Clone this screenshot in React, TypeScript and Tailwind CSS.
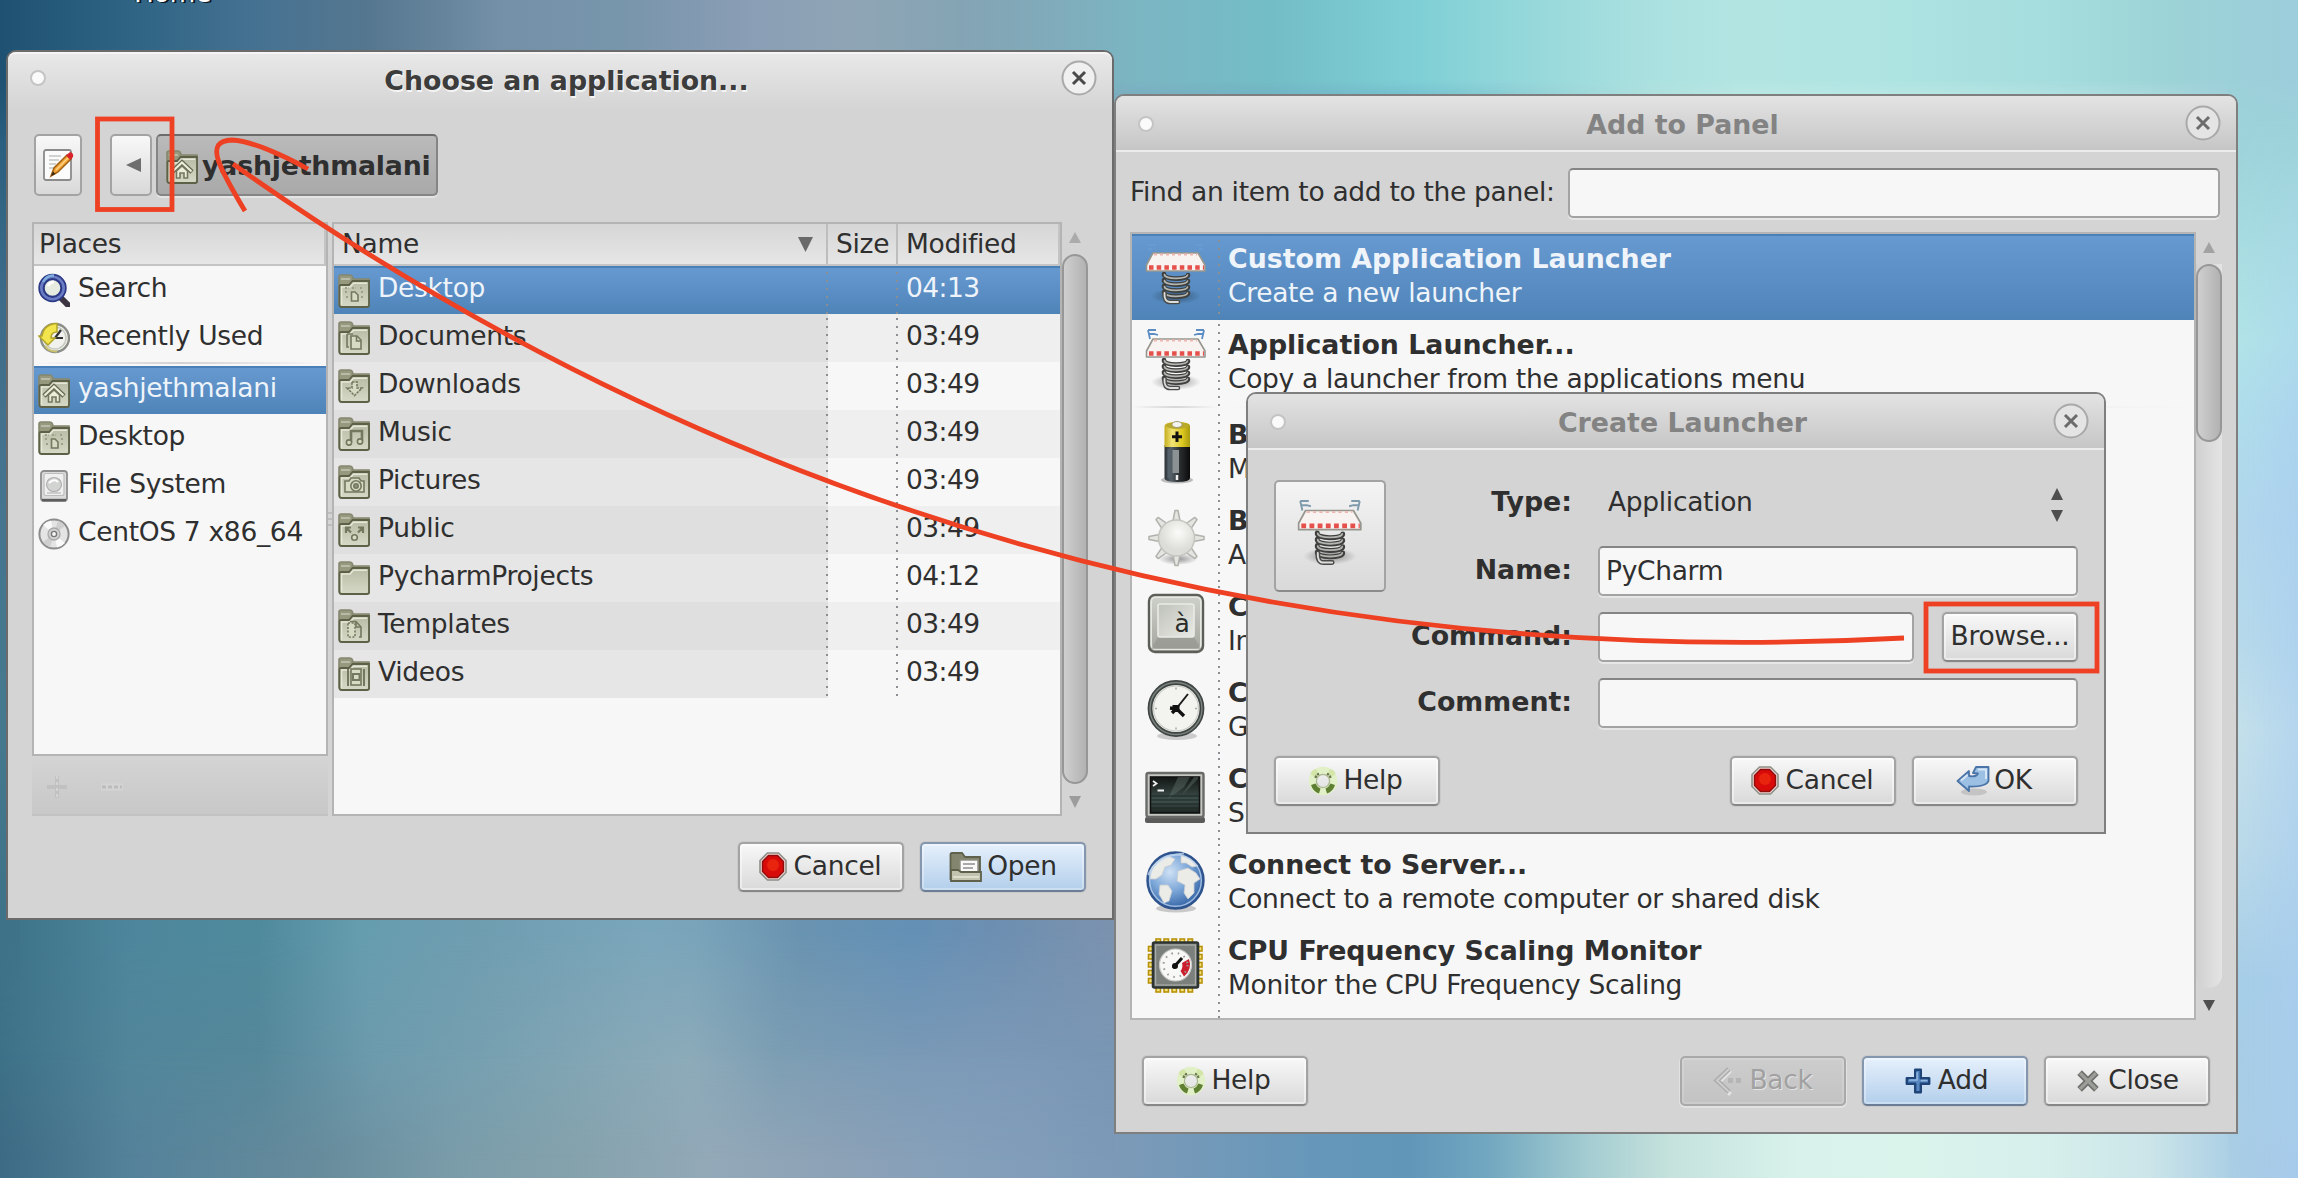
import React from "react";

type FolderKind = "plain" | "home" | "desktop" | "documents" | "downloads" | "music" | "pictures" | "public" | "templates" | "videos";

/* ---------- small icons ---------- */

function FolderEmblem({ kind }: { kind: FolderKind }) {
  const p = { fill: "#d8dbc4", stroke: "#74785f", strokeWidth: 1.6 };
  switch (kind) {
    case "home":
      return (
        <g {...p}>
          <path d="M6 22 L16 12.5 L26 22" fill="none" stroke="#63674f" strokeWidth="4.6" />
          <path d="M6.5 21.5 L16 12.5 L25.500 21.5" fill="none" stroke="#eceed9" strokeWidth="2.2" />
          <path d="M10.500 28 V21 L16 16 L21.500 21 V28 H18 V23 H14 V28 Z" fill="#eceed9" />
        </g>
      );
    case "desktop":
      return (
        <g {...p}>
          <path d="M13.500 18 H17 L20 21 V27 H13.500 Z" />
          <path d="M7 14 h4 M7 18 h3 M22 14 h3 M23 18 h3 M14 14 h4 M8 23 h2 M23 23 h2" strokeDasharray="2 1.5" fill="none" strokeWidth="2" stroke="#9da188" />
        </g>
      );
    case "documents":
      return (
        <g {...p}>
          <path d="M9 13 V26 H11 M9 13 H15" fill="none" />
          <path d="M13 15 H19 L23 19 V28 H13 Z" />
          <path d="M18.500 15 V20 H23" fill="none" />
        </g>
      );
    case "downloads":
      return (
        <g {...p}>
          <path d="M14 13 H19 V19 H24 L16.500 26.500 L9 19 H14 Z" strokeDasharray="2.500 1" />
        </g>
      );
    case "music":
      return (
        <g {...p}>
          <path d="M13 25 V14 H24 V24" fill="none" strokeWidth="2.6" />
          <circle cx="11" cy="25.500" r="2.600" />
          <circle cx="22" cy="24.500" r="2.600" />
        </g>
      );
    case "pictures":
      return (
        <g {...p}>
          <path d="M7 16 H11 L13 13 H21 L23 16 H26 V27 H7 Z" />
          <circle cx="18" cy="21" r="5.200" />
          <circle cx="18" cy="21" r="2.200" fill="#8d9177" />
        </g>
      );
    case "public":
      return (
        <g {...p} fill="none">
          <path d="M8 20 V14.500 H13 M8.500 15 L13 19.500 M25 20 V14.500 H20 M24.500 15 L20 19.500" strokeWidth="2.200" />
          <circle cx="16.500" cy="24.500" r="2.800" fill="#d8dbc4" />
        </g>
      );
    case "templates":
      return (
        <g {...p}>
          <path d="M10 14 H17 V28 H10 Z" strokeDasharray="2 1.600" />
          <path d="M12 12.500 H18 L23 18 V28 H21" fill="none" />
          <path d="M18 13 V18 H23" fill="none" />
        </g>
      );
    case "videos":
      return (
        <g {...p}>
          <path d="M10 12 V29 M26 12 V29" fill="none" strokeWidth="2" />
          <rect x="13" y="12" width="10" height="16" />
          <rect x="15" y="17" width="6.500" height="6" strokeWidth="2" />
        </g>
      );
    default:
      return null;
  }
}

function FolderIcon({ kind }: { kind: FolderKind }) {
  return (
    <svg width="32" height="34" viewBox="0 0 32 34" className="shrink-0">
      <path d="M1 8 V3 Q1 1 3 1 H12 Q14 1 14.500 3 L15 5 H31 V32 H3 Q1 32 1 30 Z" fill="#97997f" stroke="#85886f" strokeWidth="1.600" />
      <path d="M3 5 H12" stroke="#b9bba9" strokeWidth="2" />
      <path d="M1.500 12 Q1.500 11 3 11 H11 L14.500 7 H31 V31 Q31 33 29 33 H3.500 Q1.500 33 1.500 31 Z" fill="url(#folderFace)" stroke="#5d6148" strokeWidth="1.800" />
      <path d="M3.600 30.500 V13 H12 L15.500 9.200 H29" fill="none" stroke="#e6e8d8" strokeWidth="1.400" />
      <FolderEmblem kind={kind} />
    </svg>
  );
}

function SearchIcon() {
  return (
    <svg width="32" height="34" viewBox="0 0 32 34" className="shrink-0">
      <path d="M22 24 L30 32" stroke="#3c3440" strokeWidth="6" strokeLinecap="round" />
      <circle cx="14.500" cy="15" r="11" fill="#e6ece0" stroke="#2c3a86" strokeWidth="6.400" />
      <circle cx="14.500" cy="15" r="11.200" fill="none" stroke="#6a7cc4" strokeWidth="2.600" />
      <path d="M5 9 Q9 2 16 2.500" stroke="#7fb0e0" strokeWidth="2.500" fill="none" />
      <path d="M10 13 q2 -4 6 -4" stroke="#ffffff" strokeWidth="3" fill="none" />
    </svg>
  );
}

function RecentIcon() {
  return (
    <svg width="32" height="34" viewBox="0 0 32 34" className="shrink-0">
      <circle cx="17" cy="17" r="14" fill="#f1f2ee" stroke="#8b8e86" strokeWidth="2.400" />
      <circle cx="17" cy="17" r="11" fill="none" stroke="#c6cabf" strokeWidth="1.500" />
      <path d="M17 17 L23 9 M17 17 H25" stroke="#333" strokeWidth="2.200" />
      <path d="M19 2.500 L19 11 Q13 11 13 17 H17 L10 24 L0.800 15 H4 Q6 3 19 2.500 Z" fill="#f2e44c" stroke="#b3a52a" strokeWidth="1.500" />
      <path d="M7 25 Q11 31 19 30.500" fill="none" stroke="#c9c06a" strokeWidth="2" />
    </svg>
  );
}

function DriveIcon() {
  return (
    <svg width="32" height="34" viewBox="0 0 32 34" className="shrink-0">
      <rect x="3" y="2" width="26" height="30" rx="3" fill="#dcdcdc" stroke="#8e8e8e" strokeWidth="1.800" />
      <path d="M4 31 H28" stroke="#5e5e5e" strokeWidth="2.400" />
      <rect x="6" y="4.500" width="20" height="22" rx="2" fill="#f0f0f0" stroke="#bdbdbd" strokeWidth="1.200" />
      <ellipse cx="16" cy="15.500" rx="7.500" ry="7" fill="#d2d4d2" stroke="#b0b0b0" strokeWidth="1.200" />
      <path d="M11 14 Q16 9 20 13" stroke="#fff" strokeWidth="2" fill="none" />
      <path d="M9 24 H23" stroke="#c2c2c2" strokeWidth="1.500" />
    </svg>
  );
}

function DiscIcon() {
  return (
    <svg width="32" height="34" viewBox="0 0 32 34" className="shrink-0">
      <circle cx="16" cy="17" r="14.600" fill="#e4e4e4" stroke="#8c8c8c" strokeWidth="2" />
      <path d="M16 17 L5 8 A14 14 0 0 1 13 3.500 Z M16 17 L27 26 A14 14 0 0 1 19 30.500 Z" fill="#fafafa" />
      <path d="M16 17 L20 3.500 A14 14 0 0 1 27 9 Z M16 17 L12 30.500 A14 14 0 0 1 5 25 Z" fill="#cfcfcf" />
      <circle cx="16" cy="17" r="6" fill="#d2d2d2" stroke="#a8a8a8" strokeWidth="1.300" />
      <circle cx="16" cy="17" r="2.600" fill="#f7f7f7" stroke="#777" strokeWidth="1.400" />
    </svg>
  );
}

function EditIcon() {
  return (
    <svg width="32" height="34" viewBox="0 0 32 34">
      <rect x="2" y="2" width="27" height="30" rx="2" fill="#fbfbfb" stroke="#8b8b8b" strokeWidth="1.800" />
      <path d="M7 8 H19 M7 12 H17 M7 16 H14 M7 20 H12" stroke="#c3c6c3" strokeWidth="1.600" />
      <path d="M9 28 L12 20 L25 7 L29 11 L16 24 Z" fill="#f2a535" stroke="#a35f12" strokeWidth="1.500" />
      <path d="M14 22 L26 10" stroke="#ffd58a" strokeWidth="1.500" />
      <path d="M24 7.500 L28 4 Q32 5 31 9 L28.500 12 Z" fill="#d8232a" />
      <path d="M9 28 L11 23.500 L13.500 26 Z" fill="#3b2a14" />
    </svg>
  );
}

function CancelIcon() {
  return (
    <svg width="32" height="32" viewBox="0 0 32 32" className="shrink-0">
      <path d="M9.500 2 H20.500 L28 9.500 V21.500 L20.500 29 H9.500 L2 21.500 V9.500 Z" fill="#f4dada" stroke="#8d8f88" strokeWidth="1.600" />
      <path d="M10.500 4.500 H19.500 L25.500 10.500 V20.500 L19.500 26.500 H10.500 L4.500 20.500 V10.500 Z" fill="#d80a0a" stroke="#8e0d0d" strokeWidth="1.400" />
      <circle cx="15" cy="14" r="6" fill="#e8240e" />
    </svg>
  );
}

function OpenIcon() {
  return (
    <svg width="34" height="32" viewBox="0 0 34 32" className="shrink-0">
      <path d="M1.500 28 V3.500 Q1.500 2 3 2 H13 L16 6 H31 V28 Z" fill="#83856f" stroke="#5f614d" strokeWidth="1.800" />
      <rect x="11" y="9" width="18" height="14" fill="#fafafa" stroke="#8b8d80" strokeWidth="1.400" />
      <path d="M14 13 H26 M14 17 H24" stroke="#8f8f8f" strokeWidth="1.600" />
      <path d="M2 30 V19 H9 L12 21 H32 V30 Z" fill="#c2c4b0" stroke="#5f614d" strokeWidth="1.800" />
      <path d="M4 26 H30" stroke="#dcdece" strokeWidth="2" />
    </svg>
  );
}

function HelpIcon() {
  return (
    <svg width="32" height="32" viewBox="0 0 32 32" className="-ml-1 shrink-0">
      <circle cx="16" cy="16" r="10.500" fill="none" stroke="#e2f0c8" strokeWidth="7.500" />
      <circle cx="16" cy="16" r="6.600" fill="none" stroke="#aab890" strokeWidth="1.200" />
      <path d="M3.500 9 Q4 5 9 4 L11.500 8 Q8 9 7.500 12 Z M28.500 9 Q28 5 23 4 L20.500 8 Q24 9 24.500 12 Z" fill="#d3e6a8" />
      <path d="M4 20 Q6 26.500 12 28.500 L13.500 23.500 Q10 22 8.500 18.500 Z M28 20 Q26 26.500 20 28.500 L18.500 23.500 Q22 22 23.500 18.500 Z" fill="#5f7f33" />
      <path d="M8.500 13 Q9 10 12 8.800 M23.500 13 Q23 10 20 8.800" stroke="#66754a" strokeWidth="2.200" strokeDasharray="2.500 1" fill="none" />
    </svg>
  );
}

function OkIcon() {
  return (
    <svg width="34" height="32" viewBox="0 0 34 32" className="-ml-0.5 shrink-0">
      <ellipse cx="18" cy="27" rx="13" ry="3.500" fill="#c4c4c4" />
      <path d="M1.500 16 L13 6 V11 Q20 12.500 22 8.500 L17 8 L20 2 H32.500 V16 Q30 22 13 21.500 V26 Z" fill="#9cc0e4" stroke="#4a74a8" strokeWidth="1.800" strokeLinejoin="round" />
      <path d="M5 15.500 L11.500 10 M22 4.500 H30 V14" stroke="#d6e6f5" strokeWidth="2" fill="none" />
    </svg>
  );
}

function BackIcon() {
  return (
    <svg width="32" height="32" viewBox="0 0 32 32" className="shrink-0">
      <g fill="none" transform="translate(1.500 1.500)" stroke="#e4e4e4" strokeWidth="4">
        <path d="M16 4 L4 16 L16 28" />
      </g>
      <path d="M16 4 L4 15.500 L16 27" fill="none" stroke="#acacac" strokeWidth="5" />
      <path d="M16 4 L4 15.500 L16 27" fill="none" stroke="#cdcdcd" strokeWidth="2" />
      <rect x="15" y="13" width="5" height="5" fill="#b5b5b5" />
      <rect x="23" y="13" width="5" height="5" fill="#b5b5b5" />
    </svg>
  );
}

function AddIcon() {
  return (
    <svg width="28" height="28" viewBox="1 1 30 30" className="mx-0.5 shrink-0">
      <path d="M13 4 H19 V13 H28 V19 H19 V28 H13 V19 H4 V13 H13 Z" fill="#5687c2" stroke="#1f4477" strokeWidth="2.600" strokeLinejoin="round" />
      <path d="M15 6.500 V15 H6.500 M19 15.500 H26" stroke="#93b8e0" strokeWidth="1.600" fill="none" />
    </svg>
  );
}

function CloseXIcon() {
  return (
    <svg width="28" height="28" viewBox="1 1 30 30" className="mx-0.5 shrink-0">
      <path d="M7 7 L25 25 M25 7 L7 25" stroke="#6f716d" strokeWidth="7" />
      <path d="M7.500 7.500 L24.500 24.500 M24.500 7.500 L7.500 24.500" stroke="#9b9d98" strokeWidth="3.500" />
    </svg>
  );
}

function Triangle({ dir, color, w = 12, h = 12 }: { dir: "up" | "down" | "left"; color: string; w?: number; h?: number }) {
  const d = dir === "up" ? "M6 0 L12 12 H0 Z" : dir === "down" ? "M6 12 L12 0 H0 Z" : "M0 6 L12 0 V12 Z";
  return (
    <svg width={w} height={h} viewBox="0 0 12 12" preserveAspectRatio="none">
      <path d={d} fill={color} />
    </svg>
  );
}

/* ---------- large list icons ---------- */

function LauncherIcon({ size = 64, motion = "#5b8cc4", faint = false }: { size?: number; motion?: string; faint?: boolean }) {
  const coils = [29, 35, 41, 47];
  return (
    <svg width={size} height={size} viewBox="0 0 64 64" className="overflow-visible">
      <ellipse cx="32" cy="51" rx="25" ry="8" fill="url(#softShadow)" />
      <g fill="none" strokeLinecap="round">
        {coils.map((y) => (
          <g key={y}>
            <path d={`M20 ${y} C19 ${y + 6} 44 ${y + 6} 44 ${y + 1}`} stroke="#3f403e" strokeWidth="4.600" />
            <path d={`M20.500 ${y + 0.500} C20 ${y + 5.500} 43 ${y + 5.500} 43.500 ${y + 1}`} stroke="#b3b5b1" strokeWidth="1.700" />
          </g>
        ))}
        <path d="M20.500 48 Q20 57 26 57 H34" stroke="#4a4b49" strokeWidth="4.600" />
        <path d="M20.500 48 Q20 57 26 57 H34" stroke="#dcdedb" strokeWidth="1.800" />
      </g>
      <path d="M9 8 H54 L61 20 V26 H2.500 V20 Z" fill="#f8f3f0" stroke="#96968f" strokeWidth="1.600" strokeLinejoin="round" />
      <path d="M10 9.500 H53" stroke="#efb6b0" strokeWidth="1.800" strokeDasharray="3 3" />
      <path d="M5 22.500 H60" stroke="#e5504b" strokeWidth="4.400" strokeDasharray="4.500 3.200" />
      {!faint && (
        <g stroke={motion} strokeWidth="1.800" fill="none">
          <path d="M4 -1 H12 M5 3 H10 L14 4 M4 -1 L6 8 M60 -1 H52 M59 3 H54 L50 4 M60 -1 L58 8" />
        </g>
      )}
      {faint && <path d="M4 0 H12 M4 4 H8 M59 0 H52 M59 4 H55" stroke="#6b9dd3" strokeWidth="1.500" />}
    </svg>
  );
}

function BatteryIcon() {
  return (
    <svg width="64" height="64" viewBox="0 0 64 64">
      <ellipse cx="33" cy="59" rx="16" ry="3.500" fill="#bbb" />
      <path d="M20.500 24 H46 V57 Q46 61 33 61 Q20.500 61 20.500 57 Z" fill="url(#batteryBody)" />
      <path d="M20.500 26 V5 Q20.500 1 33 1 Q46 1 46 5 V26 Z" fill="url(#batteryTop)" />
      <ellipse cx="33" cy="4.500" rx="11" ry="3.500" fill="#b9a92c" />
      <ellipse cx="33" cy="3.500" rx="5" ry="3" fill="#f3f3f0" stroke="#a09c7c" />
      <path d="M33 10.500 V21 M28 15.700 H38" stroke="#111" strokeWidth="3" />
      <path d="M28.500 29 H35 V52 H28.500 Z" fill="#8c9194" />
      <path d="M33 54 V59" stroke="#eee" strokeWidth="2.500" />
      <path d="M25 28 V57" stroke="#54606a" strokeWidth="3" />
    </svg>
  );
}

function BrightnessIcon() {
  const angles = [0, 45, 90, 135, 180, 225, 270, 315];
  return (
    <svg width="64" height="64" viewBox="0 0 64 64" className="overflow-visible">
      <ellipse cx="34" cy="52" rx="20" ry="6" fill="url(#softShadow)" />
      {angles.map((a) => (
        <path key={a} d="M29 14 L31 3.500 H34 L36 14 Z" fill="#e4e5e1" stroke="#b0b2ac" strokeWidth="1.500" strokeLinejoin="round" transform={`rotate(${a} 32.500 31)`} />
      ))}
      <circle cx="32.500" cy="31" r="18" fill="url(#sunFace)" stroke="#c3c5bf" strokeWidth="1.500" />
    </svg>
  );
}

function CharacterIcon() {
  return (
    <svg width="64" height="64" viewBox="0 0 64 64">
      <rect x="5" y="2" width="54" height="57" rx="6" fill="url(#keyBody)" stroke="#5c5e58" strokeWidth="2.400" />
      <rect x="7.200" y="4.200" width="49.600" height="52" rx="4.500" fill="none" stroke="#e6e8e3" strokeWidth="1.600" />
      <path d="M7 56 L14 44 H50 L57 56 Z" fill="#8f928a" opacity="0.550" />
      <rect x="14" y="11" width="36" height="33" rx="2" fill="url(#keyFace)" stroke="#e9ebe6" strokeWidth="1.600" />
      <text x="38" y="38.500" fontSize="25" fontFamily="DejaVu Sans" textAnchor="middle" fill="#2b2d2b">
        à
      </text>
    </svg>
  );
}

function ClockIcon() {
  return (
    <svg width="64" height="64" viewBox="0 0 64 64">
      <ellipse cx="33" cy="57" rx="20" ry="4" fill="#ccc" />
      <circle cx="32" cy="29.500" r="26" fill="#f3f3ef" stroke="#3f4542" strokeWidth="4.800" />
      <circle cx="32" cy="29.500" r="26" fill="none" stroke="#7c8480" strokeWidth="1.400" />
      <circle cx="32" cy="29.500" r="22.500" fill="none" stroke="#c9cbc5" strokeWidth="1.200" />
      <path d="M32 8.500 v2 M32 48.500 v2 M11 29.500 h2 M51 29.500 h2" stroke="#aaa" strokeWidth="1.500" />
      <path d="M32 30 L44 15" stroke="#1b1b1b" strokeWidth="2" />
      <path d="M26 29 L33 30 L40 37 M32 30 L28 34" stroke="#111" strokeWidth="3.400" fill="none" />
      <rect x="28.500" y="26" width="7" height="7" fill="#111" />
    </svg>
  );
}

function TerminalIcon() {
  return (
    <svg width="64" height="64" viewBox="0 0 64 64">
      <rect x="1" y="52" width="60" height="6" rx="2" fill="#5b5c5a" />
      <rect x="2.500" y="8" width="57" height="44" rx="2" fill="#c4c6c2" stroke="#6a6b68" strokeWidth="2.400" />
      <rect x="6.500" y="12" width="49" height="36" fill="url(#termFace)" stroke="#111" strokeWidth="1.600" />
      <path d="M34 12 L24 34 L40 22 L46 12 Z M50 12 L38 30 L54 14 V12 Z" fill="#5f6e69" opacity="0.450" />
      <path d="M9 16 L12.500 18.500 L9 21 M13.500 25.500 H20" stroke="#f0f0f0" strokeWidth="1.800" fill="none" />
      <path d="M7 31 H55 M7 35 H55 M7 39 H55 M7 43 H55" stroke="#1d2724" strokeWidth="1" />
    </svg>
  );
}

function GlobeIcon() {
  return (
    <svg width="64" height="64" viewBox="0 0 64 64">
      <ellipse cx="32" cy="57.500" rx="20" ry="4" fill="#c9c9c9" />
      <circle cx="31.500" cy="29.500" r="28" fill="url(#globeSea)" stroke="#2f548d" strokeWidth="2.400" />
      <g fill="#ebece7" stroke="#c6cbd0" strokeWidth="0.800">
        <path d="M8 16 Q14 8 24 5 L31 8 L27 14 L21 16 L18 24 L12 28 L6 28 Q5 22 8 16 Z" />
        <path d="M37 4 Q48 7 54 15 L48 16 L42 12 L37 12 Z" />
        <path d="M16 34 L24 34 L28 40 L25 50 L20 52 L15 43 Z" />
        <path d="M34 20 L44 17 L52 22 L56 28 L50 32 L50 42 L44 48 L40 42 L41 34 L33 30 Z" />
      </g>
      <path d="M4 24 Q14 4 40 2.500" stroke="#cfe0f3" strokeWidth="2" fill="none" opacity="0.700" />
      <circle cx="31.500" cy="29.500" r="25.800" fill="none" stroke="#b6d0ee" strokeWidth="1.400" opacity="0.800" />
    </svg>
  );
}

function CpuIcon() {
  const pins = [12, 20, 28, 36, 44];
  return (
    <svg width="64" height="64" viewBox="0 0 64 64">
      <g fill="#f3e27a" stroke="#b8930a" strokeWidth="1.600">
        {pins.map((p) => (
          <g key={p}>
            <rect x={p} y="2" width="4.500" height="5" />
            <rect x={p} y="49" width="4.500" height="6" />
            <rect x="4.500" y={p - 2.500} width="5" height="4.500" />
            <rect x="53" y={p - 2.500} width="5" height="4.500" />
          </g>
        ))}
      </g>
      <rect x="9" y="5.500" width="45" height="45" rx="1.500" fill="#7b807d" stroke="#2e3432" strokeWidth="2.600" />
      <rect x="11.600" y="8" width="39.800" height="40" fill="none" stroke="#a9adaa" strokeWidth="1.200" />
      <circle cx="31.500" cy="28" r="16" fill="#f8f8f7" stroke="#c9cac8" strokeWidth="1.200" />
      <path d="M45 22 A15 15 0 0 1 40 39.500 L36.500 34 A8.500 8.500 0 0 0 38 26 Z" fill="#cc1f2b" />
      <circle cx="31.500" cy="28" r="12" fill="none" stroke="#999" strokeWidth="2" strokeDasharray="1.500 5" />
      <path d="M29 31 L38 21" stroke="#111" strokeWidth="3" />
      <circle cx="31" cy="29" r="3" fill="#111" />
    </svg>
  );
}

/* ---------- shared widgets ---------- */

function Button({ icon, label, tone = "normal", className = "w-[166px]" }: { icon?: React.ReactNode; label: string; tone?: "normal" | "primary" | "disabled"; className?: string }) {
  const tones = {
    normal: "border-[#a3a3a3] border-b-[#878787] bg-linear-to-b from-[#f8f8f8] to-[#d9d9d9] text-[#2f2f2f] shadow-[0_0_0_1px_#cacaca,inset_0_0_0_2px_rgba(255,255,255,0.45)]",
    primary: "border-[#8597ae] border-b-[#6b7d94] bg-linear-to-b from-[#e6f0fc] to-[#b3cfeb] text-[#2f2f2f] shadow-[0_0_0_1px_#cacaca,inset_0_0_0_2px_rgba(255,255,255,0.3)]",
    disabled: "border-[#a9a9a9] bg-linear-to-b from-[#cdcdcd] to-[#c3c3c3] text-[#a1a1a1] shadow-[0_1px_0_1px_#e2e2e2,inset_0_0_0_2px_rgba(255,255,255,0.15)] [text-shadow:1px_1px_0_#e4e4e4]",
  };
  return (
    <button className={`flex h-[50px] items-center justify-center gap-1 rounded-[5px] border-2 ${tones[tone]} ${className}`}>
      {icon}
      <span className="pb-0.5">{label}</span>
    </button>
  );
}

function TitleBar({ title, active }: { title: string; active?: boolean }) {
  return (
    <div
      className={
        active
          ? "flex h-[58px] shrink-0 items-start rounded-t-[8px] border-t-2 border-[#f6f4f4] bg-linear-to-b from-[#e8e8e8] to-[#d4d4d4] px-[22px] pt-[2px]"
          : "flex h-[56px] shrink-0 items-start rounded-t-[8px] border-b-2 border-[#ececec] bg-linear-to-b from-[#e3e3e3] to-[#c6c6c6] px-[22px] pt-[4px]"
      }
    >
      <div className={`size-4 rounded-full border-2 border-[#c4c4c4] bg-[#fafafa] ${active ? "mt-[14px]" : "mt-4"}`} />
      <div
        className={`flex-1 text-center text-[26.800px] leading-[50px] font-bold tracking-normal ${active ? "pl-[26px] text-[#3c3c3c] [text-shadow:1px_2px_0_#f4f4f4]" : "pl-[26px] text-[#838383]"}`}
      >
        {title}
      </div>
      <svg width="36" height="36" viewBox="0 0 36 36" className={active ? "mt-1 -mr-[7px]" : "mt-[5px] -mr-[7px]"}>
        <circle cx="18" cy="18" r="16.500" fill={active ? "#f0f0f0" : "#e4e4e4"} stroke="#a9a9a9" strokeWidth="2" />
        <path d="M12 12 L24 24 M24 12 L12 24" stroke={active ? "#4a4a4a" : "#6c6c6c"} strokeWidth="3" />
      </svg>
    </div>
  );
}

function Entry({ value = "", className = "" }: { value?: string; className?: string }) {
  return <div className={`h-[50px] rounded-[5px] border-2 border-[#a3a3a3] border-t-[#858585] bg-[#f7f7f7] pl-1.5 leading-[46px] shadow-[0_2px_0_#e6e6e6] ${className}`}>{value}</div>;
}

const dots = "bg-[repeating-linear-gradient(to_bottom,transparent_0_4px,#8b8f94_4px_6px,transparent_6px_8px)]";
const selected = "border-t-2 border-[#4a80b8] bg-linear-to-b from-[#6699d0] to-[#4f84b9] text-[#eef4fa]";

/* ---------- file chooser ---------- */

const files: { name: string; kind: FolderKind; time: string }[] = [
  { name: "Desktop", kind: "desktop", time: "04:13" },
  { name: "Documents", kind: "documents", time: "03:49" },
  { name: "Downloads", kind: "downloads", time: "03:49" },
  { name: "Music", kind: "music", time: "03:49" },
  { name: "Pictures", kind: "pictures", time: "03:49" },
  { name: "Public", kind: "public", time: "03:49" },
  { name: "PycharmProjects", kind: "plain", time: "04:12" },
  { name: "Templates", kind: "templates", time: "03:49" },
  { name: "Videos", kind: "videos", time: "03:49" },
];

function PlaceRow({ icon, label, active }: { icon: React.ReactNode; label: string; active?: boolean }) {
  return (
    <div className={`flex h-12 items-center gap-2 pl-1 ${active ? selected : ""}`}>
      {icon}
      <span className={active ? "pb-[6px]" : "pb-[5px]"}>{label}</span>
    </div>
  );
}

function ChooserDialog() {
  return (
    <section className="absolute top-[50px] left-[6px] z-20 flex h-[870px] w-[1108px] flex-col rounded-t-[10px] border-2 border-[#6b6b6b] bg-[#d4d4d4]">
      <TitleBar title="Choose an application..." active />
      <div className="mt-6 flex pl-[26px]">
        <div className="flex h-[62px] w-12 items-center justify-center rounded-[5px] border-2 border-[#a3a3a3] bg-linear-to-b from-[#f8f8f8] to-[#d9d9d9]">
          <EditIcon />
        </div>
        <div className="ml-7 flex h-[62px] w-[42px] items-center justify-center rounded-[5px] border-2 border-[#a3a3a3] bg-linear-to-b from-[#f8f8f8] to-[#d9d9d9] pl-1">
          <Triangle dir="left" color="#6e6e6e" w={15} h={14} />
        </div>
        <div className="ml-1 flex h-[62px] w-[282px] items-center gap-1 rounded-[5px] border-2 border-[#858585] border-t-[#6c6c6c] bg-linear-to-b from-[#bababa] to-[#a9a9a9] pl-2 shadow-[0_2px_0_#e4e4e4]">
          <div className="pt-1">
            <FolderIcon kind="home" />
          </div>
          <span className="pt-0.5 text-[26.800px] font-bold tracking-[-0.200px]">yashjethmalani</span>
        </div>
      </div>

      <div className="mt-[26px] flex h-[594px] pl-6">
        <div className="w-[296px]">
          <div className="flex h-[534px] flex-col border-2 border-[#b4b4b4] bg-[#f7f7f7]">
            <div className="h-[42px] border-r-2 border-b-2 border-[#c4c4c4] bg-linear-to-b from-[#d6d6d6] to-[#e6e6e6] pl-[5px] leading-[40px]">Places</div>
            <PlaceRow icon={<SearchIcon />} label="Search" />
            <PlaceRow icon={<RecentIcon />} label="Recently Used" />
            <div className="h-1 bg-linear-to-r from-[#f7f7f7] via-[#d2d2d2] to-[#f7f7f7] bg-[length:100%_2px] bg-no-repeat" />
            <PlaceRow icon={<FolderIcon kind="home" />} label="yashjethmalani" active />
            <PlaceRow icon={<FolderIcon kind="desktop" />} label="Desktop" />
            <PlaceRow icon={<DriveIcon />} label="File System" />
            <PlaceRow icon={<DiscIcon />} label="CentOS 7 x86_64" />
          </div>
          <div className="flex h-[60px] items-center gap-8 border-b-2 border-[#c2c2c2] bg-linear-to-b from-[#d4d4d4] to-[#c8c8c8] pt-1 pl-[14px]">
            <svg width="22" height="26" viewBox="0 0 22 26">
              <path d="M11 2 V24 M1 13 H21" stroke="#c1c1c1" strokeWidth="4" />
              <path d="M11 2 V24" stroke="#dadada" strokeWidth="1.500" strokeDasharray="3 3" />
            </svg>
            <svg width="24" height="26" viewBox="0 0 24 26">
              <path d="M1 13 H23" stroke="#d4d4d4" strokeWidth="7" />
              <path d="M2 13 H22" stroke="#bcbcbc" strokeWidth="3" strokeDasharray="4 2" />
            </svg>
          </div>
        </div>
        <div className="flex w-1 flex-col gap-[4px] pt-[290px]">
          <div className="h-[2px] bg-[#bdbdbd]" />
          <div className="h-[2px] bg-[#bdbdbd]" />
          <div className="h-[2px] bg-[#bdbdbd]" />
        </div>
        <div className="w-[730px] border-2 border-[#b4b4b4] bg-[#f7f7f7]">
          <div className="flex h-[42px] border-r-2 border-b-2 border-[#c4c4c4] bg-linear-to-b from-[#d6d6d6] to-[#e6e6e6] leading-[40px]">
            <div className="flex w-[494px] items-center justify-between border-r-2 border-[#bdbdbd] pr-[13px] pl-2">
              Name
              <Triangle dir="down" color="#6a6a6a" w={15} h={15} />
            </div>
            <div className="w-[70px] border-r-2 border-[#bdbdbd] pl-2">Size</div>
            <div className="flex-1 pl-2">Modified</div>
          </div>
          {files.map((f, i) => {
            const active = i === 0;
            const odd = i % 2 === 1;
            return (
              <div key={f.name} className={`flex h-12 ${active ? selected : odd ? "bg-[#efefef]" : "bg-[#f7f7f7]"}`}>
                <div className={`flex w-[494px] items-center gap-2 pl-1 ${active ? "" : odd ? "bg-[#dfdfdf]" : "bg-[#e6e6e6]"}`}>
                  <FolderIcon kind={f.kind} />
                  <span className={`flex-1 ${active ? "pb-[6px]" : "pb-[5px]"}`}>{f.name}</span>
                  <span className={`w-[2px] self-stretch ${dots}`} />
                </div>
                <div className="flex w-[70px] justify-end">
                  <span className={`w-[2px] ${dots}`} />
                </div>
                <div className={`flex flex-1 items-center pl-2 tracking-[-0.550px] ${active ? "pb-[6px]" : "pb-[5px]"}`}>{f.time}</div>
              </div>
            );
          })}
        </div>
        <div className="flex w-[26px] flex-col items-center pt-[10px]">
          <Triangle dir="up" color="#ababab" w={12} h={11} />
          <div className="mt-[11px] h-[530px] w-[26px] rounded-full border-2 border-[#979797] bg-linear-to-r from-[#cfcfcf] to-[#b2b2b2]" />
          <div className="mt-3">
            <Triangle dir="down" color="#9c9c9c" w={12} h={12} />
          </div>
        </div>
      </div>

      <div className="mt-[26px] flex justify-end gap-4 pr-[26px]">
        <Button icon={<CancelIcon />} label="Cancel" className="w-[166px] pr-[3px]" />
        <Button icon={<OpenIcon />} label="Open" tone="primary" />
      </div>
    </section>
  );
}

/* ---------- add to panel ---------- */

const applets: { title: string; text: string; icon: React.ReactNode }[] = [
  { title: "Custom Application Launcher", text: "Create a new launcher", icon: <LauncherIcon faint /> },
  { title: "Application Launcher...", text: "Copy a launcher from the applications menu", icon: <LauncherIcon /> },
  { title: "Battery Charge Monitor", text: "Monitor a laptop's remaining power", icon: <BatteryIcon /> },
  { title: "Brightness Applet", text: "Adjusts laptop panel brightness", icon: <BrightnessIcon /> },
  { title: "Character Palette", text: "Insert characters", icon: <CharacterIcon /> },
  { title: "Clock", text: "Get the current time and date", icon: <ClockIcon /> },
  { title: "Command", text: "Shows the output of a command", icon: <TerminalIcon /> },
  { title: "Connect to Server...", text: "Connect to a remote computer or shared disk", icon: <GlobeIcon /> },
  { title: "CPU Frequency Scaling Monitor", text: "Monitor the CPU Frequency Scaling", icon: <CpuIcon /> },
];

function AddToPanelDialog() {
  return (
    <section className="absolute top-[94px] left-[1114px] z-10 flex h-[1040px] w-[1124px] flex-col rounded-t-[10px] border-2 border-[#7f7f7f] bg-[#d4d4d4]">
      <TitleBar title="Add to Panel" />
      <div className="mt-4 flex items-center pl-[14px]">
        <div className="w-[438px] pb-[2px]">Find an item to add to the panel:</div>
        <Entry className="w-[652px]" />
      </div>
      <div className="mt-[14px] flex h-[788px] pl-[14px]">
        <div className="flex w-[1066px] flex-col border-2 border-[#b4b4b4] bg-[#f7f7f7]">
          {applets.map((a, i) => (
            <React.Fragment key={a.title}>
              {i === 2 && (
                <div className="flex h-1 items-start">
                  <div className="h-[2px] w-[86px] bg-linear-to-r from-[#f7f7f7] via-[#d6d6d6] to-[#f7f7f7]" />
                  <div className="h-[2px] flex-1 bg-linear-to-r from-[#f7f7f7] via-[#e0e0e0] to-[#f7f7f7]" />
                </div>
              )}
              <div className={`flex h-[86px] ${i === 0 ? selected : ""}`}>
                <div className={`flex w-[86px] justify-center pl-[2px] ${i === 0 ? "pt-[9px]" : "pt-[11px]"}`}>{a.icon}</div>
                <div className={`w-[2px] ${dots}`} />
                <div className={`flex-1 pl-2 leading-[34px] ${i === 0 ? "pt-[6px]" : "pt-[8px]"}`}>
                  <div className="text-[26.800px] font-bold tracking-normal">{a.title}</div>
                  <div>{a.text}</div>
                </div>
              </div>
            </React.Fragment>
          ))}
          <div className="flex flex-1 pl-[86px]">
            <div className={`w-[2px] ${dots}`} />
          </div>
        </div>
        <div className="flex w-[26px] flex-col items-center pt-[10px]">
          <Triangle dir="up" color="#a2a2a2" w={12} h={11} />
          <div className="mt-[11px] h-[724px] w-[26px] rounded-b-full bg-linear-to-r from-[#d0d0d0] to-[#e4e4e4]">
            <div className="h-[178px] rounded-full border-2 border-[#979797] bg-linear-to-r from-[#cfcfcf] to-[#b2b2b2]" />
          </div>
          <div className="mt-3">
            <Triangle dir="down" color="#4e4e4e" w={12} h={11} />
          </div>
        </div>
      </div>
      <div className="mt-9 flex gap-4 px-[26px]">
        <Button icon={<HelpIcon />} label="Help" className="mr-auto w-[166px]" />
        <Button icon={<BackIcon />} label="Back" tone="disabled" />
        <Button icon={<AddIcon />} label="Add" tone="primary" />
        <Button icon={<CloseXIcon />} label="Close" className="w-[166px] pr-[3px]" />
      </div>
    </section>
  );
}

/* ---------- create launcher ---------- */

function Label({ children }: { children: React.ReactNode }) {
  return <div className="w-[188px] pr-[2px] pb-[2px] text-right text-[26.800px] font-bold tracking-normal">{children}</div>;
}

function CreateLauncherDialog() {
  return (
    <section className="absolute top-[392px] left-[1246px] z-30 flex h-[442px] w-[860px] flex-col rounded-t-[10px] border-2 border-[#7f7f7f] bg-[#d4d4d4]">
      <TitleBar title="Create Launcher" />
      <div className="mt-[30px] flex px-[26px]">
        <div className="flex size-[112px] items-center justify-center rounded-[5px] border-2 border-[#a3a3a3] border-b-[#8b8b8b] bg-linear-to-b from-[#f4f4f4] to-[#d9d9d9]">
          <LauncherIcon size={68} motion="#7f99ad" />
        </div>
        <div className="flex flex-1 flex-col">
          <div className="flex h-[46px] items-center gap-6">
            <Label>Type:</Label>
            <div className="flex flex-1 items-center justify-between pr-[15px] pl-[10px]">
              <span className="pb-[2px]">Application</span>
              <div className="flex flex-col gap-[10px] pt-1">
                <Triangle dir="up" color="#4e4e4e" w={12} h={12} />
                <Triangle dir="down" color="#4e4e4e" w={12} h={12} />
              </div>
            </div>
          </div>
          <div className="mt-5 flex items-center gap-6">
            <Label>Name:</Label>
            <Entry value="PyCharm" className="flex-1" />
          </div>
          <div className="mt-4 flex items-center gap-6">
            <Label>Command:</Label>
            <div className="flex flex-1 justify-between">
              <Entry className="w-[316px]" />
              <Button label="Browse..." className="w-[136px]" />
            </div>
          </div>
          <div className="mt-4 flex items-center gap-6">
            <Label>Comment:</Label>
            <Entry className="flex-1" />
          </div>
        </div>
      </div>
      <div className="mt-7 flex gap-4 px-[26px]">
        <Button icon={<HelpIcon />} label="Help" className="mr-auto w-[166px]" />
        <Button icon={<CancelIcon />} label="Cancel" className="w-[166px] pr-[3px]" />
        <Button icon={<OkIcon />} label="OK" />
      </div>
    </section>
  );
}

/* ---------- desktop ---------- */

function Wallpaper() {
  return (
    <>
      <div className="absolute inset-0 bg-[linear-gradient(90deg,#3d6a84_0px,#54829a_130px,#678c9c_320px,#7a9ca9_450px,#84a2ac_570px,#93a9b8_710px,#8da2b6_830px,#85a0ba_950px,#7c9ab8_1114px,#7399b8_1200px,#6497ba_1330px,#6196b9_1410px,#72a8c0_1490px,#a5cdd2_1590px,#c5e2dc_1670px,#d9f3ec_1800px,#daf3eb_1920px,#d6efec_2050px,#cbe5e9_2150px,#a8cde4_2240px,#a5c8e2_2298px)]" />
      <div className="absolute top-0 left-0 h-full w-[1114px] bg-[linear-gradient(90deg,#3d7288_0px,#52869a_130px,#55889a_260px,#6c9bad_370px,#76a0b0_480px,#86a8b6_620px,#8cabb9_690px,#7c9eb3_780px,#7a9ab6_900px,#7c99b7_1010px,#7997b4_1110px)] [mask-image:linear-gradient(to_bottom,black_1050px,transparent_1160px)]" />
      <div className="absolute top-0 left-0 h-full w-[1114px] bg-[linear-gradient(90deg,#3d7288_0px,#4d869c_130px,#4f8a9c_260px,#659dae_360px,#6f9db0_480px,#7aa6bb_650px,#78a3b9_700px,#6993b0_800px,#6390b5_910px,#6e8fb0_1010px,#7b92ae_1110px)] [mask-image:linear-gradient(to_bottom,black_930px,transparent_1060px)]" />
      <div className="absolute top-0 left-0 h-full w-5 bg-[linear-gradient(180deg,#215575_0px,#2c6080_150px,#3d6c8a_300px,#45738f_450px,#45798f_700px,#3d7288_930px,transparent_1000px)]" />
      <div className="absolute top-0 right-0 h-full w-[70px] bg-[linear-gradient(180deg,#9cd3d8_0px,#9ed4da_150px,#a8dee1_250px,#b1e5e7_340px,#b0dfea_410px,#b2d8ec_520px,#b8dbea_640px,#c6e2ea_730px,#bcdbe8_850px,#a6cee6_980px,#a8cde4_1120px,transparent_1178px)]" />
      <div className="absolute top-0 right-0 h-full w-[70px] bg-linear-to-r from-transparent to-[#a8cdf0]/60 [mask-image:linear-gradient(to_bottom,transparent_100px,black_450px)]" />
      <div className="absolute inset-x-0 top-0 h-[140px] bg-[linear-gradient(90deg,#1f5272_0px,#306585_140px,#467292_260px,#55778f_370px,#7390a8_500px,#7795ab_620px,#8a9eb5_750px,#8fa5b5_850px,#84a4b4_960px,#80abba_1050px,#7bb5c2_1130px,#73bdc6_1270px,#7fd0d6_1420px,#96d8da_1530px,#a9e0df_1640px,#b2e5e2_1740px,#ade3e1_1900px,#a5dcdd_2050px,#9cd3d6_2170px,#9ccddb_2298px)] [mask-image:linear-gradient(to_bottom,black_80px,transparent_140px)]" />
    </>
  );
}

function Annotations() {
  return (
    <svg className="pointer-events-none absolute inset-0 z-40" width="2298" height="1178" viewBox="0 0 2298 1178" fill="none" stroke="#ee4023">
      <rect x="97.500" y="119" width="74.500" height="90.500" strokeWidth="4.800" />
      <rect x="1926" y="604" width="171" height="67" strokeWidth="4.800" />
      <path d="M308 169 C285 156 252 141 232 140 C204 141 218 166 245 211" strokeWidth="4.800" />
      <path d="M233 164 Q974 688 1904 638" strokeWidth="4.800" />
    </svg>
  );
}

function SharedGradients() {
  return (
    <svg width="0" height="0" className="absolute">
      <defs>
        <linearGradient id="folderFace" x1="0" y1="0" x2="0" y2="1">
          <stop offset="0" stopColor="#b8bba4" />
          <stop offset="1" stopColor="#d6d9c6" />
        </linearGradient>
        <radialGradient id="softShadow">
          <stop offset="0" stopColor="#000" stopOpacity="0.400" />
          <stop offset="1" stopColor="#000" stopOpacity="0" />
        </radialGradient>
        <linearGradient id="batteryBody">
          <stop offset="0" stopColor="#2b3136" />
          <stop offset="0.250" stopColor="#56616a" />
          <stop offset="0.600" stopColor="#2a2d2f" />
          <stop offset="1" stopColor="#0b0b0b" />
        </linearGradient>
        <linearGradient id="batteryTop">
          <stop offset="0" stopColor="#c4ae1c" />
          <stop offset="0.300" stopColor="#f2e378" />
          <stop offset="0.700" stopColor="#dcc81e" />
          <stop offset="1" stopColor="#a89a10" />
        </linearGradient>
        <radialGradient id="sunFace" cx="0.550" cy="0.350">
          <stop offset="0" stopColor="#fbfbf9" />
          <stop offset="1" stopColor="#dcddd8" />
        </radialGradient>
        <linearGradient id="keyBody" x1="0" y1="0" x2="0" y2="1">
          <stop offset="0" stopColor="#cfd1cb" />
          <stop offset="1" stopColor="#a3a69d" />
        </linearGradient>
        <linearGradient id="keyFace" x1="0" y1="0" x2="1" y2="1">
          <stop offset="0" stopColor="#bfc2b9" />
          <stop offset="1" stopColor="#e8eae5" />
        </linearGradient>
        <linearGradient id="termFace" x1="0" y1="0" x2="0" y2="1">
          <stop offset="0" stopColor="#121615" />
          <stop offset="0.650" stopColor="#3f514c" />
          <stop offset="1" stopColor="#1c2422" />
        </linearGradient>
        <radialGradient id="globeSea" cx="0.400" cy="0.350" r="0.700">
          <stop offset="0" stopColor="#cfe1f5" />
          <stop offset="0.500" stopColor="#7ba6d8" />
          <stop offset="1" stopColor="#2c5c9f" />
        </radialGradient>
      </defs>
    </svg>
  );
}

export default function App() {
  return (
    <main className="relative h-[1178px] w-[2298px] overflow-hidden text-[26.500px] leading-[34px] tracking-[-0.320px] whitespace-nowrap text-[#2f2f2f] font-['DejaVu_Sans',sans-serif]">
      <SharedGradients />
      <Wallpaper />
      <div className="absolute top-[-24px] left-[134px] text-white [text-shadow:2px_1px_0_#0c1a26,-1px_0_0_#0c1a26]">Home</div>
      <ChooserDialog />
      <AddToPanelDialog />
      <CreateLauncherDialog />
      <Annotations />
    </main>
  );
}
